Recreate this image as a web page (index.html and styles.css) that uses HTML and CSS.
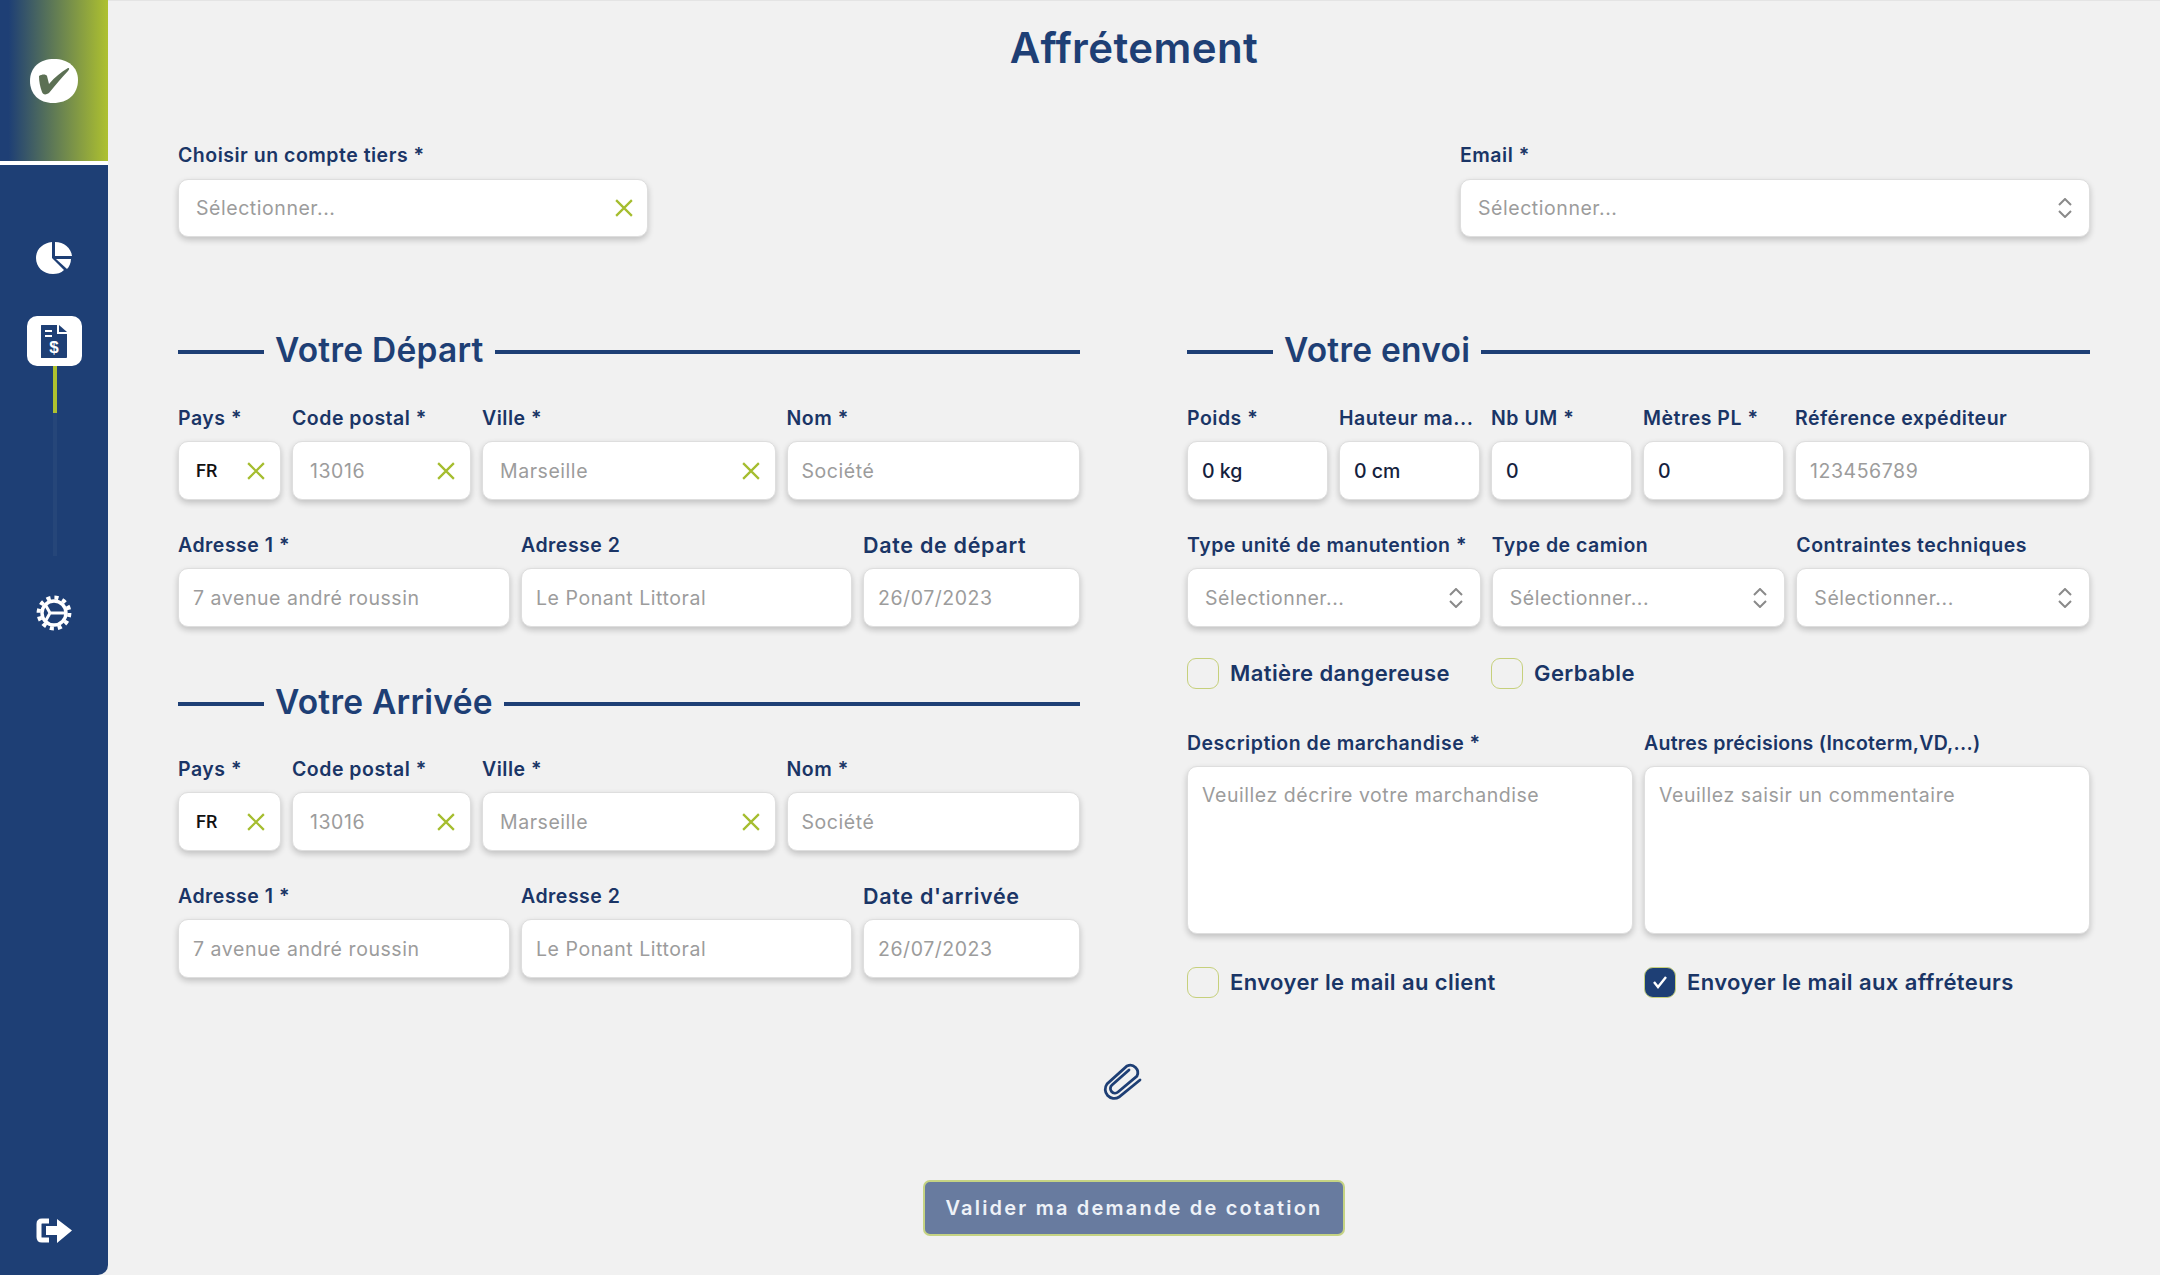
FILE: index.html
```html
<!DOCTYPE html>
<html lang="fr">
<head>
<meta charset="utf-8">
<title>Affrétement</title>
<link rel="stylesheet" href="styles.css">
</head>
<body>
<div class="app">
  <aside class="sidebar">
    <div class="logo">
      <svg class="logo-mark" viewBox="0 0 48 44"><path d="M24 0C38 0 48 8 48 21C48 35 38 44 23 44C9 44 0 35 0 22C0 8 10 0 24 0Z" fill="#fff"/><path d="M9 17C12 15 16 15 17 17L19 25C25 18 31 13 38 9C40 9 39 11 38 12C31 19 25 27 19 34C16 36 13 36 12 33C10 28 9 22 9 17Z" fill="#5c7054"/></svg>
    </div>
    <nav class="nav">
      <svg class="nav-icon pie" viewBox="0 0 36 32"><path d="M16 0V16L28 28C25 31 21 32 17 32C7 32 0 25 0 16C0 7 7 1 16 0Z" fill="#fff"/><path d="M19 0C28 0 35 6 36 14H19Z" fill="#fff"/><path d="M20 17H35C35 21 33 25 31 27Z" fill="#fff"/></svg>
      <div class="doc-btn">
        <svg class="doc" viewBox="0 0 26 33"><path d="M1 0H16V9H26V32C26 33 25 33 25 33H1C0 33 0 33 0 32V1C0 0 0 0 1 0Z" fill="#1e3f75"/><path d="M18 0L26 7H18Z" fill="#1e3f75"/><path d="M4 6H11M4 11H11" stroke="#fff" stroke-width="2"/><text x="13" y="28" class="doc-dollar">$</text></svg>
      </div>
      <div class="track"><span class="track-on"></span><span class="track-off"></span></div>
      <svg class="nav-icon gear" viewBox="0 0 36 36"><circle cx="18" cy="18" r="15.4" fill="none" stroke="#fff" stroke-width="4" stroke-dasharray="4.1 3.96"/><circle cx="18" cy="18" r="12" fill="none" stroke="#fff" stroke-width="3.4"/><path d="M14 18L9 9M14 18L9 27M14 18H29" stroke="#fff" stroke-width="3" fill="none"/></svg>
      <svg class="nav-icon logout" viewBox="0 0 36 25"><path d="M13 3H6C4 3 3 4 3 6V19C3 21 4 22 6 22H13" fill="none" stroke="#fff" stroke-width="5"/><path d="M10 8H21V1L36 12.5L21 25V17H10Z" fill="#fff"/></svg>
    </nav>
  </aside>

  <main class="main">
    <h1 class="title">Affrétement</h1>

    <div class="top-row">
      <div class="field account">
        <label class="label">Choisir un compte tiers *</label>
        <div class="control select"><span class="ph">Sélectionner...</span><svg class="x" viewBox="0 0 16 16"><path d="M1 1L15 15M15 1L1 15"/></svg></div>
      </div>
      <div class="field email">
        <label class="label">Email *</label>
        <div class="control select"><span class="ph">Sélectionner...</span><svg class="chev" viewBox="0 0 14 20"><path d="M1 7L7 1L13 7M1 13L7 19L13 13"/></svg></div>
      </div>
    </div>

    <div class="columns">
      <section>
        <h2 class="heading"><span class="rule short"></span><span>Votre Départ</span><span class="rule"></span></h2>
        <div class="addr-a">
          <div class="field"><label class="label">Pays *</label><div class="control tight"><span class="code">FR</span><svg class="x" viewBox="0 0 16 16"><path d="M1 1L15 15M15 1L1 15"/></svg></div></div>
          <div class="field"><label class="label">Code postal *</label><div class="control tight"><span class="ph">13016</span><svg class="x" viewBox="0 0 16 16"><path d="M1 1L15 15M15 1L1 15"/></svg></div></div>
          <div class="field"><label class="label">Ville *</label><div class="control tight"><span class="ph">Marseille</span><svg class="x" viewBox="0 0 16 16"><path d="M1 1L15 15M15 1L1 15"/></svg></div></div>
          <div class="field"><label class="label">Nom *</label><div class="control"><span class="ph">Société</span></div></div>
        </div>
        <div class="addr-b">
          <div class="field"><label class="label">Adresse 1 *</label><div class="control"><span class="ph">7 avenue andré roussin</span></div></div>
          <div class="field"><label class="label">Adresse 2</label><div class="control"><span class="ph">Le Ponant Littoral</span></div></div>
          <div class="field"><label class="label big">Date de départ</label><div class="control"><span class="ph">26/07/2023</span></div></div>
        </div>
        <h2 class="heading second"><span class="rule short"></span><span>Votre Arrivée</span><span class="rule"></span></h2>
        <div class="addr-a">
          <div class="field"><label class="label">Pays *</label><div class="control tight"><span class="code">FR</span><svg class="x" viewBox="0 0 16 16"><path d="M1 1L15 15M15 1L1 15"/></svg></div></div>
          <div class="field"><label class="label">Code postal *</label><div class="control tight"><span class="ph">13016</span><svg class="x" viewBox="0 0 16 16"><path d="M1 1L15 15M15 1L1 15"/></svg></div></div>
          <div class="field"><label class="label">Ville *</label><div class="control tight"><span class="ph">Marseille</span><svg class="x" viewBox="0 0 16 16"><path d="M1 1L15 15M15 1L1 15"/></svg></div></div>
          <div class="field"><label class="label">Nom *</label><div class="control"><span class="ph">Société</span></div></div>
        </div>
        <div class="addr-b">
          <div class="field"><label class="label">Adresse 1 *</label><div class="control"><span class="ph">7 avenue andré roussin</span></div></div>
          <div class="field"><label class="label">Adresse 2</label><div class="control"><span class="ph">Le Ponant Littoral</span></div></div>
          <div class="field"><label class="label big">Date d'arrivée</label><div class="control"><span class="ph">26/07/2023</span></div></div>
        </div>
      </section>

      <section>
        <h2 class="heading"><span class="rule short"></span><span>Votre envoi</span><span class="rule"></span></h2>
        <div class="ship-a">
          <div class="field"><label class="label">Poids *</label><div class="control"><span class="val">0 kg</span></div></div>
          <div class="field"><label class="label">Hauteur ma...</label><div class="control"><span class="val">0 cm</span></div></div>
          <div class="field"><label class="label">Nb UM *</label><div class="control"><span class="val">0</span></div></div>
          <div class="field"><label class="label">Mètres PL *</label><div class="control"><span class="val">0</span></div></div>
          <div class="field"><label class="label">Référence expéditeur</label><div class="control"><span class="ph">123456789</span></div></div>
        </div>
        <div class="ship-b">
          <div class="field"><label class="label">Type unité de manutention *</label><div class="control select"><span class="ph">Sélectionner...</span><svg class="chev" viewBox="0 0 14 20"><path d="M1 7L7 1L13 7M1 13L7 19L13 13"/></svg></div></div>
          <div class="field"><label class="label">Type de camion</label><div class="control select"><span class="ph">Sélectionner...</span><svg class="chev" viewBox="0 0 14 20"><path d="M1 7L7 1L13 7M1 13L7 19L13 13"/></svg></div></div>
          <div class="field"><label class="label">Contraintes techniques</label><div class="control select"><span class="ph">Sélectionner...</span><svg class="chev" viewBox="0 0 14 20"><path d="M1 7L7 1L13 7M1 13L7 19L13 13"/></svg></div></div>
        </div>
        <div class="checks-a">
          <div class="check"><span class="box"></span><span class="check-text">Matière dangereuse</span></div>
          <div class="check"><span class="box"></span><span class="check-text">Gerbable</span></div>
        </div>
        <div class="areas">
          <div class="field"><label class="label">Description de marchandise *</label><div class="control area"><span class="ph">Veuillez décrire votre marchandise</span></div></div>
          <div class="field"><label class="label tighter">Autres précisions (Incoterm,VD,...)</label><div class="control area"><span class="ph">Veuillez saisir un commentaire</span></div></div>
        </div>
        <div class="checks-b">
          <div class="check"><span class="box"></span><span class="check-text">Envoyer le mail au client</span></div>
          <div class="check"><span class="box on"><svg viewBox="0 0 16 14"><path d="M2 7L6 12L14 2"/></svg></span><span class="check-text">Envoyer le mail aux affréteurs</span></div>
        </div>
      </section>
    </div>

    <div class="attach">
      <svg viewBox="0 0 40 40"><path d="M38 19L17 36A9 9 0 0 1 5 23L25 5A7.5 7.5 0 0 1 35 15L16 31A4.5 4.5 0 0 1 10 24L27 9"/></svg>
    </div>
    <div class="actions"><button class="submit">Valider ma demande de cotation</button></div>
  </main>
</div>
</body>
</html>
```
FILE: styles.css
```css
* { box-sizing: border-box; }
html, body { margin: 0; height: 100%; }
body { background: #f1f1f1; font-family: Inter, "Noto Sans", sans-serif; color: #1a3566; overflow: hidden; }
.app { display: flex; height: 1275px; border-top: 1px solid #e4e4e4; }

.sidebar { width: 108px; flex: none; background: #1e3f75; border-bottom-right-radius: 10px; display: flex; flex-direction: column; margin-top: -1px; }
.logo { height: 161px; background: linear-gradient(90deg, #1e3f75 8%, #aec12f 100%); display: flex; align-items: center; justify-content: center; box-shadow: 0 4px 0 #fff; }
.logo-mark { width: 48px; height: 44px; }
.nav { flex: 1; display: flex; flex-direction: column; align-items: center; }
.nav-icon { display: block; }
.pie { width: 36px; height: 32px; margin-top: 81px; }
.doc-btn { width: 55px; height: 50px; margin-top: 42px; background: #fff; border-radius: 10px; display: flex; align-items: center; justify-content: center; }
.doc { width: 26px; height: 33px; }
.doc-dollar { font: 700 17px "Liberation Sans", sans-serif; fill: #fff; text-anchor: middle; }
.track { display: flex; flex-direction: column; width: 4px; margin-left: 2px; }
.track-on { height: 47px; background: #aec12f; }
.track-off { height: 143px; background: #264679; }
.gear { width: 36px; height: 36px; margin-top: 39px; }
.logout { width: 36px; height: 25px; margin-top: auto; margin-bottom: 32px; }

.main { flex: 1; padding: 19px 70px 0; min-width: 0; }
.title { margin: 0; font-size: 42px; line-height: 56px; font-weight: 600; letter-spacing: .4px; color: #1e3f75; text-align: center; }

.top-row { display: flex; justify-content: space-between; margin-top: 67px; }
.account { width: 470px; }
.email { width: 630px; }

.field { min-width: 0; }
.label { display: block; height: 24px; font-size: 19.5px; line-height: 24px; font-weight: 600; letter-spacing: .5px; color: #1a3566; white-space: nowrap; overflow: hidden; margin-bottom: 11px; }
.label.big { font-size: 21.5px; letter-spacing: .7px; }
.label.tighter { letter-spacing: .25px; }
.top-row .label { margin-bottom: 12px; }
.control { height: 59px; background: #fff; border: 1px solid #dedede; border-radius: 10px; box-shadow: 0 3px 6px rgba(0, 0, 0, .2); display: flex; align-items: center; justify-content: space-between; padding: 0 14px; font-size: 19.5px; }
.top-row .control { height: 58px; }
.control.select { padding: 0 17px; }
.account .control.select { padding-right: 14px; }
.control.tight { padding: 0 15px 0 17px; }
.ph { color: #9c9c9c; white-space: nowrap; letter-spacing: .55px; }
.val { color: #14213d; font-weight: 500; }
.code { color: #111; font: 500 18px Roboto, sans-serif; }
.x { width: 18px; height: 18px; flex: none; fill: none; stroke: #a5bd2f; stroke-width: 2; }
.chev { width: 14px; height: 20px; flex: none; fill: none; stroke: #8a8a8a; stroke-width: 2; }

.columns { display: grid; grid-template-columns: 902px 903px; gap: 107px; margin-top: 93px; }
.heading { margin: 0 0 36px; display: flex; align-items: center; gap: 11px; height: 40px; font-size: 33.5px; line-height: 40px; font-weight: 600; letter-spacing: .25px; color: #1e3f75; white-space: nowrap; }
.heading.second { margin: 55px 0 35px; }
.rule { flex: 1; height: 4px; margin-top: 3px; background: #1e3f75; }
.rule.short { flex: none; width: 86px; }

.addr-a { display: grid; grid-template-columns: 103px 179px 1fr 1fr; gap: 11px; }
.addr-b { display: grid; grid-template-columns: 332px 331px 1fr; gap: 11px; margin-top: 33px; }
.ship-a { display: grid; grid-template-columns: repeat(4, 141px) 1fr; gap: 11px; }
.ship-b { display: grid; grid-template-columns: repeat(3, 1fr); gap: 11px; margin-top: 33px; }
.checks-a { display: flex; margin-top: 30px; }
.checks-a .check:first-child { width: 304px; }
.areas { display: grid; grid-template-columns: 1fr 1fr; gap: 11px; margin-top: 42px; }
.control.area { height: 168px; align-items: flex-start; padding: 16px 14px; }
.checks-b { display: grid; grid-template-columns: 1fr 1fr; gap: 11px; margin-top: 32px; }

.check { display: flex; align-items: center; gap: 11px; height: 32px; }
.box { width: 32px; height: 31px; border: 1px solid #c6d07c; border-radius: 9px; flex: none; display: flex; align-items: center; justify-content: center; }
.box.on { background: #1e3f75; }
.box svg { width: 16px; height: 14px; fill: none; stroke: #fff; stroke-width: 2.4; }
.check-text { font-size: 22px; font-weight: 600; letter-spacing: .4px; color: #1a3566; white-space: nowrap; }

.attach { margin-top: 63px; display: flex; justify-content: center; padding-right: 24px; }
.attach svg { width: 40px; height: 40px; fill: none; stroke: #1e3f75; stroke-width: 2.8; stroke-linecap: round; }
.actions { display: flex; justify-content: center; margin-top: 79px; }
.submit { width: 422px; height: 56px; background: #687b9f; border: 2px solid #c5d383; border-radius: 7px; color: #eef2f8; font: 600 20px Inter, sans-serif; letter-spacing: 2.2px; padding: 0; }
```
